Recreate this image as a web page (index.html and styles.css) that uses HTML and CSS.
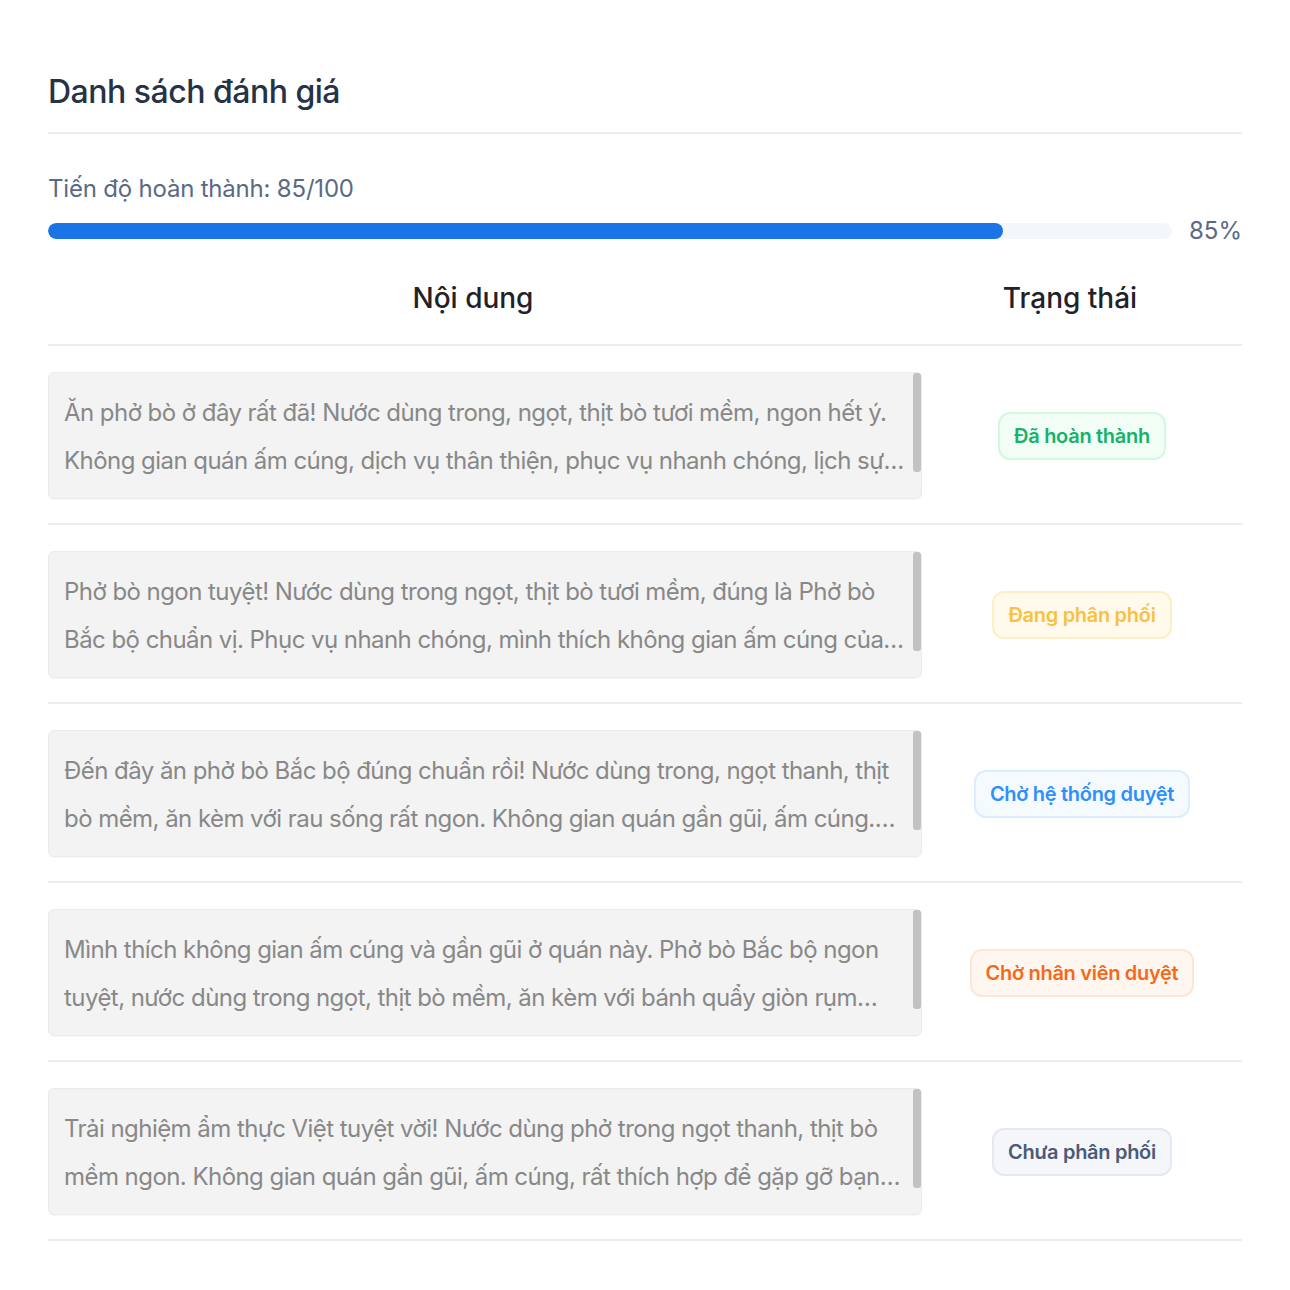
FILE: index.html
```html
<!DOCTYPE html>
<html lang="vi">
<head>
    <meta charset="UTF-8">
    <meta name="viewport" content="width=device-width, initial-scale=1.0">
    <title>Danh sách đánh giá</title>
    <link rel="stylesheet" href="styles.css">
</head>
<body>

    <div class="page">
        <h1 class="page-title">Danh sách đánh giá</h1>

        <div class="progress">
            <div class="progress-label">Tiến độ hoàn thành: 85/100</div>
            <div class="progress-row">
                <div class="progress-track">
                    <div class="progress-fill" style="width: 85%"></div>
                </div>
                <span class="progress-value">85%</span>
            </div>
        </div>

        <div class="review-list">
            <div class="review-head">
                <div>Nội dung</div>
                <div>Trạng thái</div>
            </div>

            <div class="review-row">
                <div class="review-box">
                    <p class="review-text">Ăn phở bò ở đây rất đã! Nước dùng trong, ngọt, thịt bò tươi mềm, ngon hết ý. Không gian quán ấm cúng, dịch vụ thân thiện, phục vụ nhanh chóng, lịch sự. Giá cả hợp lý, chắc chắn sẽ quay lại lần nữa.</p>
                    <span class="scroll-thumb"></span>
                </div>
                <div class="status-cell"><span class="badge badge-done">Đã hoàn thành</span></div>
            </div>

            <div class="review-row">
                <div class="review-box">
                    <p class="review-text">Phở bò ngon tuyệt! Nước dùng trong ngọt, thịt bò tươi mềm, đúng là Phở bò Bắc bộ chuẩn vị. Phục vụ nhanh chóng, mình thích không gian ấm cúng của quán, sẽ giới thiệu cho bạn bè.</p>
                    <span class="scroll-thumb"></span>
                </div>
                <div class="status-cell"><span class="badge badge-assigning">Đang phân phối</span></div>
            </div>

            <div class="review-row">
                <div class="review-box">
                    <p class="review-text">Đến đây ăn phở bò Bắc bộ đúng chuẩn rồi! Nước dùng trong, ngọt thanh, thịt bò mềm, ăn kèm với rau sống rất ngon. Không gian quán gần gũi, ấm cúng. Nhân viên nhiệt tình, chu đáo.</p>
                    <span class="scroll-thumb"></span>
                </div>
                <div class="status-cell"><span class="badge badge-system">Chờ hệ thống duyệt</span></div>
            </div>

            <div class="review-row">
                <div class="review-box">
                    <p class="review-text">Mình thích không gian ấm cúng và gần gũi ở quán này. Phở bò Bắc bộ ngon tuyệt, nước dùng trong ngọt, thịt bò mềm, ăn kèm với bánh quẩy giòn rụm ngon hết sảy, nhất định sẽ quay lại.</p>
                    <span class="scroll-thumb"></span>
                </div>
                <div class="status-cell"><span class="badge badge-staff">Chờ nhân viên duyệt</span></div>
            </div>

            <div class="review-row">
                <div class="review-box">
                    <p class="review-text">Trải nghiệm ẩm thực Việt tuyệt vời! Nước dùng phở trong ngọt thanh, thịt bò mềm ngon. Không gian quán gần gũi, ấm cúng, rất thích hợp để gặp gỡ bạn bè và gia đình vào cuối tuần.</p>
                    <span class="scroll-thumb"></span>
                </div>
                <div class="status-cell"><span class="badge badge-none">Chưa phân phối</span></div>
            </div>
        </div>
    </div>

</body>
</html>
```

FILE: styles.css
```css
body {
    margin: 0;
    background: #FFFFFF;
    font-family: Inter, 'Noto Sans', sans-serif;
}

.page {
    padding: 72px 48px 40px;
}

.page-title {
    margin: 0;
    font-size: 32px;
    line-height: 40px;
    font-weight: 500;
    letter-spacing: -0.5px;
    color: #263245;
    padding-bottom: 20px;
    border-bottom: 2px solid #e9edf2;
}

/* Progress */
.progress {
    margin-top: 39px;
}

.progress-label {
    font-size: 24px;
    line-height: 32px;
    color: #5a6a85;
    letter-spacing: -0.2px;
}

.progress-row {
    display: flex;
    align-items: center;
    gap: 17px;
    margin-top: 10px;
}

.progress-track {
    flex: 1;
    height: 16px;
    border-radius: 8px;
    background-color: #f3f7fb;
    overflow: hidden;
}

.progress-fill {
    height: 100%;
    border-radius: 8px;
    background-color: #1b74e6;
}

.progress-value {
    font-size: 24px;
    line-height: 32px;
    color: #5a6a85;
}

/* Review table */
.review-list {
    margin-top: 5px;
}

.review-head {
    display: grid;
    grid-template-columns: 850px 1fr;
    padding: 28px 0 28px;
    border-bottom: 2px solid #e9edf2;
    font-size: 28px;
    line-height: 36px;
    font-weight: 500;
    color: #1f2329;
    text-align: center;
}

.review-row {
    display: grid;
    grid-template-columns: 874px 1fr;
    align-items: center;
    padding: 26px 0 24px;
    border-bottom: 2px solid #e9edf2;
}

.review-box {
    display: flex;
    align-items: flex-start;
    height: 125px;
    background-color: #f3f3f3;
    border: 1px solid #ebebeb;
    border-radius: 6px;
    box-shadow: 0 1px 1px rgba(0, 0, 0, 0.03);
}

.review-text {
    flex: 1;
    margin: 16px 4px 0 15px;
    max-height: 96px;
    font-size: 24px;
    line-height: 48px;
    letter-spacing: -0.55px;
    color: #888888;
    display: -webkit-box;
    -webkit-line-clamp: 2;
    -webkit-box-orient: vertical;
    overflow: hidden;
}

.scroll-thumb {
    flex: none;
    width: 8px;
    height: 99px;
    border-radius: 3px;
    background-color: #c2c2c2;
}

.status-cell {
    display: flex;
    justify-content: center;
}

.badge {
    display: inline-block;
    padding: 0 14px;
    height: 44px;
    line-height: 44px;
    border: 2px solid;
    border-radius: 12px;
    font-size: 20px;
    font-weight: 600;
    letter-spacing: -0.3px;
}

.badge-done {
    color: #17b26a;
    background-color: #f1fdf5;
    border-color: #d3f8df;
}

.badge-assigning {
    color: #f8c142;
    background-color: #fffaeb;
    border-color: #fdefc4;
}

.badge-system {
    color: #2e90fa;
    background-color: #f5faff;
    border-color: #dbeeff;
}

.badge-staff {
    color: #f5691b;
    background-color: #fff7ef;
    border-color: #fde6d2;
}

.badge-none {
    color: #4b5a77;
    background-color: #f4f6f9;
    border-color: #e4e8ef;
}
```
